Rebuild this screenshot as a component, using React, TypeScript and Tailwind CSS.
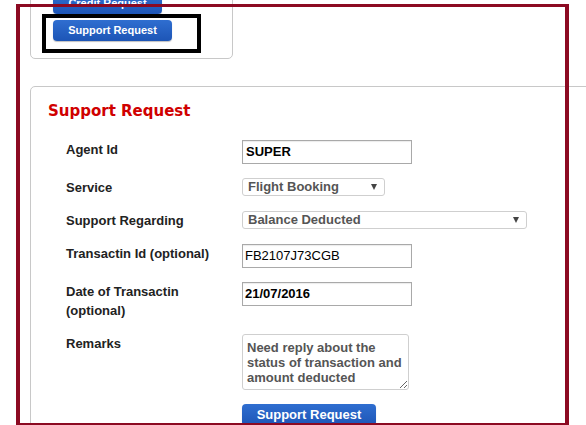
import React from 'react';

function FakeSelect({ value, width }: { value: string; width: string }) {
  return (
    <div
      className={`${width} h-[18px] flex items-center justify-between border border-[#cfcfcf] rounded-[3px] bg-white pl-[5px] pr-[7px] text-[13px] leading-[16px] font-bold text-[#555]`}
    >
      <span>{value}</span>
      <span className="w-0 h-0 border-l-[3px] border-r-[3px] border-t-[6px] border-l-transparent border-r-transparent border-t-[#444]" />
    </div>
  );
}

function Row({ label, mt, children }: { label: React.ReactNode; mt: string; children: React.ReactNode }) {
  return (
    <div className={`flex items-start ${mt}`}>
      <div className="w-[176px] shrink-0 text-[13px] leading-[19px] font-bold text-[#222]">{label}</div>
      {children}
    </div>
  );
}

const btn =
  'rounded-[4px] bg-[linear-gradient(#2f6ed0,#1d55b6)] text-white font-bold shadow-[0_1px_1px_rgba(0,0,0,0.25)]';

export default function App() {
  return (
    <div
      className="relative w-[586px] h-[425px] overflow-hidden bg-white"
      style={{ fontFamily: '"Liberation Sans", Arial, sans-serif' }}
    >
      {/* top panel, mostly scrolled off */}
      <div className="ml-[30px] mt-[-22px] w-[203px] border border-[#c8c8c8] rounded-[5px] pl-[22px] pt-[14px] pb-[17px]">
        <div className={`${btn} w-[109px] h-[21px] text-[11px] leading-[21px] text-center`}>Credit Request</div>
        <div className={`${btn} mt-[6px] w-[119px] h-[21px] text-[11px] leading-[21px] text-center`}>Support Request</div>
      </div>

      {/* form panel */}
      <div className="ml-[30px] mt-[27px] w-[620px] h-[400px] border border-[#c8c8c8] rounded-[5px] pl-[17px] pt-[14px]">
        <h2
          className="text-[15px] leading-[20px] font-bold text-[#d00000]"
          style={{ fontFamily: '"DejaVu Sans", Verdana, sans-serif' }}
        >
          Support Request
        </h2>

        <div className="ml-[18px] mt-[19px]">
          <Row label="Agent Id" mt="mt-0">
            <div className="w-[170px] h-[24px] border border-[#a9a9a9] px-[3px] text-[13px] leading-[22px] font-bold text-black shadow-[inset_0_1px_1px_rgba(0,0,0,0.08)]">
              SUPER
            </div>
          </Row>
          <Row label="Service" mt="mt-[14px]">
            <FakeSelect value="Flight Booking" width="w-[143px]" />
          </Row>
          <Row label="Support Regarding" mt="mt-[14px]">
            <FakeSelect value="Balance Deducted" width="w-[285px]" />
          </Row>
          <Row label="Transactin Id (optional)" mt="mt-[14px]">
            <div className="w-[170px] h-[24px] border border-[#a9a9a9] px-[2px] text-[13px] leading-[22px] text-black shadow-[inset_0_1px_1px_rgba(0,0,0,0.08)]">
              FB2107J73CGB
            </div>
          </Row>
          <Row
            label={
              <>
                Date of Transactin
                <br />
                (optional)
              </>
            }
            mt="mt-[14px]"
          >
            <div className="w-[170px] h-[24px] border border-[#a9a9a9] px-[2px] text-[13px] leading-[22px] font-bold text-black shadow-[inset_0_1px_1px_rgba(0,0,0,0.08)]">
              21/07/2016
            </div>
          </Row>
          <Row label="Remarks" mt="mt-[14px]">
            <textarea
              readOnly
              defaultValue="Need reply about the status of transaction and amount deducted"
              className="block w-[167px] h-[56px] border border-[#cfcfcf] rounded-[3px] pl-[4px] pr-[2px] pt-[5px] text-[13px] leading-[15px] font-bold text-[#555] overflow-hidden resize outline-none"
              style={{ fontFamily: '"Liberation Sans", Arial, sans-serif' }}
            />
          </Row>
          <div className="ml-[176px] mt-[14px]">
            <div className={`${btn} w-[134px] h-[22px] text-[13px] leading-[21px] text-center`}>Support Request</div>
          </div>
        </div>
      </div>

      {/* annotations */}
      <div className="absolute left-[42px] top-[14px] w-[159px] h-[39px] border-4 border-black" />
      <div className="absolute left-[16px] top-[4px] w-[553px] h-[421px] border-l-4 border-r-4 border-t-[3px] border-b-2 border-[#8c0a22]" />
    </div>
  );
}
